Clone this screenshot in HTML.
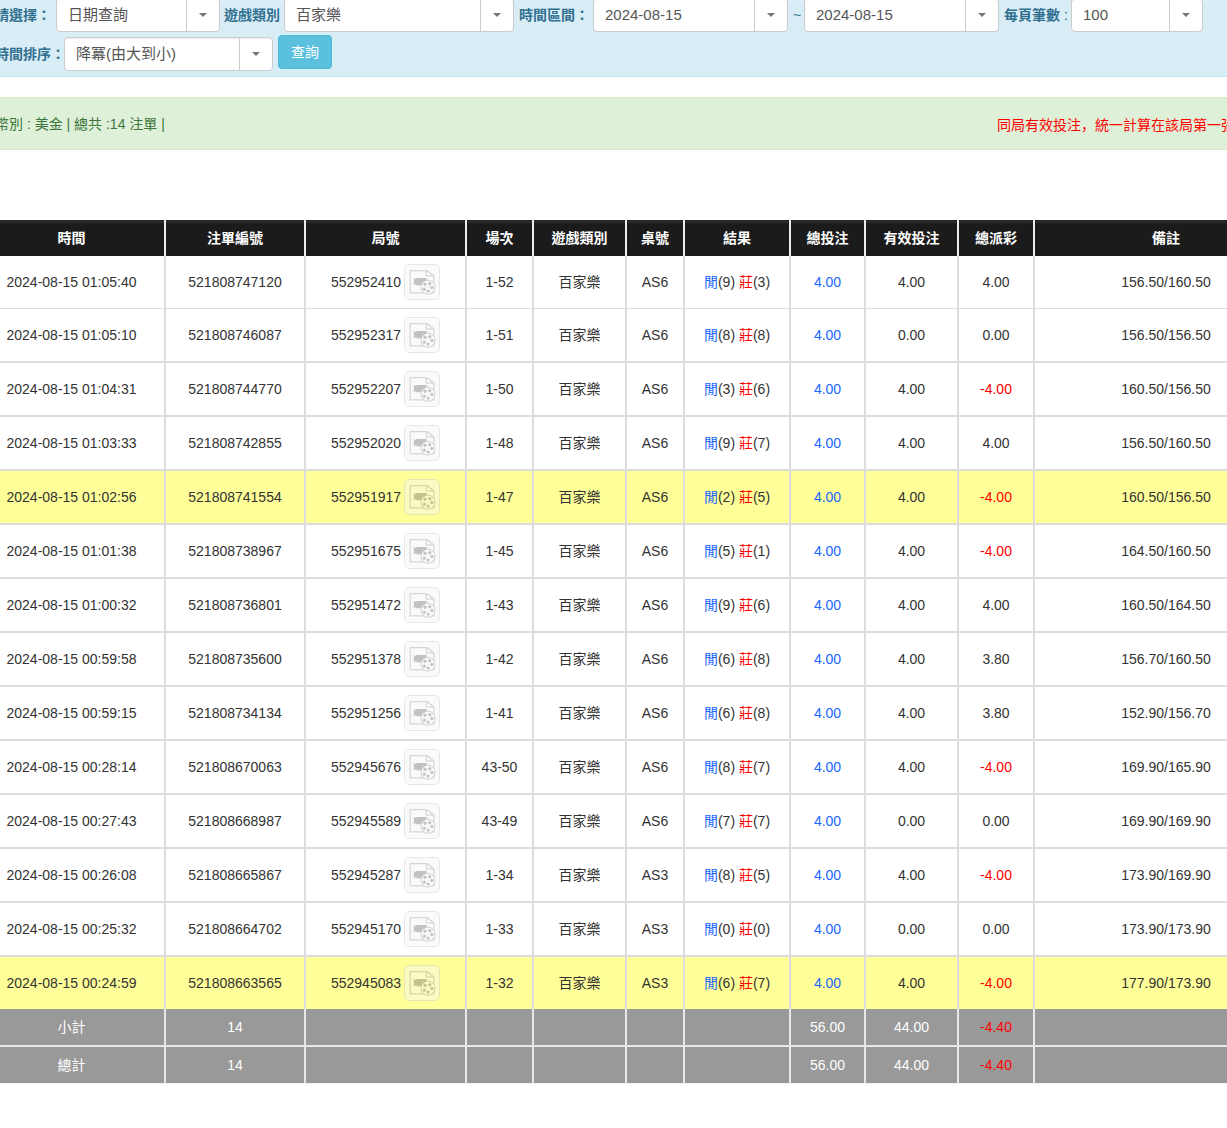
<!DOCTYPE html>
<html lang="zh-Hant">
<head>
<meta charset="utf-8">
<title>注單查詢</title>
<style>
*{box-sizing:border-box}
html,body{margin:0;padding:0}
body{width:1227px;height:1128px;overflow:hidden;position:relative;background:#fff;font-family:"Liberation Sans","Noto Sans CJK TC",sans-serif;font-size:14px;line-height:20px;color:#333}
#wrap{position:absolute;left:-21px;top:0;width:1318px;height:1128px}
.info{position:absolute;left:0;top:-10px;width:1318px;height:87px;background:#d9edf7;border:1px solid #bce8f1;border-radius:4px;color:#31708f}
.lbl{position:absolute;font-weight:bold;color:#31708f;font-size:14px;line-height:20px;white-space:nowrap}
.sel{position:absolute;height:34px;background:#fff;border:1px solid #ccc;border-radius:4px;font-size:15px;line-height:32px;color:#555;padding-left:11px;white-space:nowrap;box-shadow:inset 0 1px 1px rgba(0,0,0,.075)}
.sel i{position:absolute;right:0;top:0;width:33px;height:32px;border-left:1px solid #ccc}
.sel i:after{content:"";position:absolute;left:12px;top:14px;border-left:4px solid transparent;border-right:4px solid transparent;border-top:4px solid #777}
.btn{position:absolute;left:298px;top:44px;width:54px;height:34px;background:#5bc0de;border:1px solid #46b8da;border-radius:4px;color:#fff;font-size:14px;line-height:32px;text-align:center}
.succ{position:absolute;left:0;top:97px;width:1318px;height:53px;background:#dff0d8;border:1px solid #d6e9c6;border-radius:4px;color:#3c763d;padding:16px 15px 0 15px;line-height:20px;white-space:nowrap}
.succ .warn{position:absolute;left:1017px;top:16px;color:#f00}
table{position:absolute;left:0;top:220px;border-collapse:separate;border-spacing:0;table-layout:fixed;width:1318px}
th{height:36px;background:#1b1b1b;background:linear-gradient(#1e1e1e 0,#2b2b2b 1px,#2a2a2a 2px,#1b1b1b 4px,#1b1b1b 35px,#121212 36px);color:#fff;font-weight:bold;text-align:center;padding:0;border-right:2px solid #eee;font-size:14px}
td{height:54px;padding:0;text-align:center;border-right:2px solid #ddd;border-bottom:2px solid #ddd;vertical-align:middle;white-space:nowrap}
tbody tr:first-child td{height:53px;border-bottom-width:1px}
tbody tr:last-child td{height:52px;border-bottom:0}
th:last-child,td:last-child{border-right:0}
tr.hl td{background:#ffff99}
.neg{color:#f00}
.lnk{color:#1a66ff}
.pl{color:#1a66ff}
.bk{color:#f00}
.gid{display:inline-block;vertical-align:middle}
.vid{display:inline-block;vertical-align:middle;width:36px;height:36px;margin-left:3px;border:1px solid #ccc;border-radius:5px;background:#f4f4f4;overflow:hidden;opacity:.45}
.vid svg{display:block;margin:-1px}
tfoot td{height:38px;background:#999;color:#fff;border-bottom:2px solid #e7e7e7;border-right-color:#e7e7e7}
tfoot tr:last-child td{height:37px;border-bottom:1px solid #f4f4f4}
tfoot td.neg{color:#f00}
</style>
</head>
<body>
<div id="wrap">
<div class="info">
<span class="lbl" style="left:15px;top:14px">請選擇：</span>
<div class="sel" style="left:76px;top:7px;width:164px">日期查詢<i></i></div>
<span class="lbl" style="left:244px;top:14px">遊戲類別</span>
<div class="sel" style="left:304px;top:7px;width:230px">百家樂<i></i></div>
<span class="lbl" style="left:539px;top:14px">時間區間：</span>
<div class="sel" style="left:613px;top:7px;width:195px">2024-08-15<i></i></div>
<span class="lbl" style="left:813px;top:14px;font-weight:normal">~</span>
<div class="sel" style="left:824px;top:7px;width:195px">2024-08-15<i></i></div>
<span class="lbl" style="left:1024px;top:14px">每頁筆數 <span style="font-weight:normal">:</span></span>
<div class="sel" style="left:1091px;top:7px;width:132px">100<i></i></div>
<span class="lbl" style="left:15px;top:53px">時間排序：</span>
<div class="sel" style="left:84px;top:46px;width:209px">降冪(由大到小)<i></i></div>
<div class="btn">查詢</div>
</div>
<div class="succ">幣別 : 美金 | 總共 :14 注單 |<span class="warn">同局有效投注<span lang="ja" style="font-family:'Noto Sans CJK JP',sans-serif">，</span>統一計算在該局第一張注單</span></div>
<table>
<colgroup><col style="width:187px"><col style="width:140px"><col style="width:161px"><col style="width:67px"><col style="width:93px"><col style="width:58px"><col style="width:106px"><col style="width:75px"><col style="width:93px"><col style="width:76px"><col style="width:262px"></colgroup>
<thead><tr><th>時間</th><th>注單編號</th><th>局號</th><th>場次</th><th>遊戲類別</th><th>桌號</th><th>結果</th><th>總投注</th><th>有效投注</th><th>總派彩</th><th>備註</th></tr></thead>
<tbody>
<tr><td>2024-08-15 01:05:40</td><td>521808747120</td><td class="g"><span class="gid">552952410</span><span class="vid"><svg width="36" height="36" viewBox="0 0 36 36"><path d="M6.2 6.6h16.2l7.4 5.3v17h-23.6z" fill="#f4f4f4" stroke="#a6a6a6" stroke-width="1.2"/><path d="M22.4 6.6v5.3h7.4z" fill="#fff" stroke="#a6a6a6" stroke-width="1.2" stroke-linejoin="round"/><path d="M9.8 13.9l2.4 1.4v-1.4h10.5v7.4h-10.5v-1.4l-2.4 1.4z" fill="#7a7a7a"/><circle cx="24" cy="23.2" r="7" fill="#fafafa" stroke="#9a9a9a" stroke-width="1"/><g fill="#828282"><circle cx="21" cy="20.3" r="1.7"/><circle cx="25.7" cy="19.8" r="1.7"/><circle cx="27.9" cy="23.45" r="1.7"/><circle cx="24.25" cy="27.1" r="1.7"/><circle cx="20.3" cy="25.15" r="1.7"/><circle cx="23.8" cy="23.2" r=".5"/></g></svg></span></td><td>1-52</td><td>百家樂</td><td>AS6</td><td><span class="pl">閒</span>(9) <span class="bk">莊</span>(3)</td><td class="lnk">4.00</td><td>4.00</td><td>4.00</td><td>156.50/160.50</td></tr>
<tr><td>2024-08-15 01:05:10</td><td>521808746087</td><td class="g"><span class="gid">552952317</span><span class="vid"><svg width="36" height="36" viewBox="0 0 36 36"><path d="M6.2 6.6h16.2l7.4 5.3v17h-23.6z" fill="#f4f4f4" stroke="#a6a6a6" stroke-width="1.2"/><path d="M22.4 6.6v5.3h7.4z" fill="#fff" stroke="#a6a6a6" stroke-width="1.2" stroke-linejoin="round"/><path d="M9.8 13.9l2.4 1.4v-1.4h10.5v7.4h-10.5v-1.4l-2.4 1.4z" fill="#7a7a7a"/><circle cx="24" cy="23.2" r="7" fill="#fafafa" stroke="#9a9a9a" stroke-width="1"/><g fill="#828282"><circle cx="21" cy="20.3" r="1.7"/><circle cx="25.7" cy="19.8" r="1.7"/><circle cx="27.9" cy="23.45" r="1.7"/><circle cx="24.25" cy="27.1" r="1.7"/><circle cx="20.3" cy="25.15" r="1.7"/><circle cx="23.8" cy="23.2" r=".5"/></g></svg></span></td><td>1-51</td><td>百家樂</td><td>AS6</td><td><span class="pl">閒</span>(8) <span class="bk">莊</span>(8)</td><td class="lnk">4.00</td><td>0.00</td><td>0.00</td><td>156.50/156.50</td></tr>
<tr><td>2024-08-15 01:04:31</td><td>521808744770</td><td class="g"><span class="gid">552952207</span><span class="vid"><svg width="36" height="36" viewBox="0 0 36 36"><path d="M6.2 6.6h16.2l7.4 5.3v17h-23.6z" fill="#f4f4f4" stroke="#a6a6a6" stroke-width="1.2"/><path d="M22.4 6.6v5.3h7.4z" fill="#fff" stroke="#a6a6a6" stroke-width="1.2" stroke-linejoin="round"/><path d="M9.8 13.9l2.4 1.4v-1.4h10.5v7.4h-10.5v-1.4l-2.4 1.4z" fill="#7a7a7a"/><circle cx="24" cy="23.2" r="7" fill="#fafafa" stroke="#9a9a9a" stroke-width="1"/><g fill="#828282"><circle cx="21" cy="20.3" r="1.7"/><circle cx="25.7" cy="19.8" r="1.7"/><circle cx="27.9" cy="23.45" r="1.7"/><circle cx="24.25" cy="27.1" r="1.7"/><circle cx="20.3" cy="25.15" r="1.7"/><circle cx="23.8" cy="23.2" r=".5"/></g></svg></span></td><td>1-50</td><td>百家樂</td><td>AS6</td><td><span class="pl">閒</span>(3) <span class="bk">莊</span>(6)</td><td class="lnk">4.00</td><td>4.00</td><td class="neg">-4.00</td><td>160.50/156.50</td></tr>
<tr><td>2024-08-15 01:03:33</td><td>521808742855</td><td class="g"><span class="gid">552952020</span><span class="vid"><svg width="36" height="36" viewBox="0 0 36 36"><path d="M6.2 6.6h16.2l7.4 5.3v17h-23.6z" fill="#f4f4f4" stroke="#a6a6a6" stroke-width="1.2"/><path d="M22.4 6.6v5.3h7.4z" fill="#fff" stroke="#a6a6a6" stroke-width="1.2" stroke-linejoin="round"/><path d="M9.8 13.9l2.4 1.4v-1.4h10.5v7.4h-10.5v-1.4l-2.4 1.4z" fill="#7a7a7a"/><circle cx="24" cy="23.2" r="7" fill="#fafafa" stroke="#9a9a9a" stroke-width="1"/><g fill="#828282"><circle cx="21" cy="20.3" r="1.7"/><circle cx="25.7" cy="19.8" r="1.7"/><circle cx="27.9" cy="23.45" r="1.7"/><circle cx="24.25" cy="27.1" r="1.7"/><circle cx="20.3" cy="25.15" r="1.7"/><circle cx="23.8" cy="23.2" r=".5"/></g></svg></span></td><td>1-48</td><td>百家樂</td><td>AS6</td><td><span class="pl">閒</span>(9) <span class="bk">莊</span>(7)</td><td class="lnk">4.00</td><td>4.00</td><td>4.00</td><td>156.50/160.50</td></tr>
<tr class="hl"><td>2024-08-15 01:02:56</td><td>521808741554</td><td class="g"><span class="gid">552951917</span><span class="vid"><svg width="36" height="36" viewBox="0 0 36 36"><path d="M6.2 6.6h16.2l7.4 5.3v17h-23.6z" fill="#f4f4f4" stroke="#a6a6a6" stroke-width="1.2"/><path d="M22.4 6.6v5.3h7.4z" fill="#fff" stroke="#a6a6a6" stroke-width="1.2" stroke-linejoin="round"/><path d="M9.8 13.9l2.4 1.4v-1.4h10.5v7.4h-10.5v-1.4l-2.4 1.4z" fill="#7a7a7a"/><circle cx="24" cy="23.2" r="7" fill="#fafafa" stroke="#9a9a9a" stroke-width="1"/><g fill="#828282"><circle cx="21" cy="20.3" r="1.7"/><circle cx="25.7" cy="19.8" r="1.7"/><circle cx="27.9" cy="23.45" r="1.7"/><circle cx="24.25" cy="27.1" r="1.7"/><circle cx="20.3" cy="25.15" r="1.7"/><circle cx="23.8" cy="23.2" r=".5"/></g></svg></span></td><td>1-47</td><td>百家樂</td><td>AS6</td><td><span class="pl">閒</span>(2) <span class="bk">莊</span>(5)</td><td class="lnk">4.00</td><td>4.00</td><td class="neg">-4.00</td><td>160.50/156.50</td></tr>
<tr><td>2024-08-15 01:01:38</td><td>521808738967</td><td class="g"><span class="gid">552951675</span><span class="vid"><svg width="36" height="36" viewBox="0 0 36 36"><path d="M6.2 6.6h16.2l7.4 5.3v17h-23.6z" fill="#f4f4f4" stroke="#a6a6a6" stroke-width="1.2"/><path d="M22.4 6.6v5.3h7.4z" fill="#fff" stroke="#a6a6a6" stroke-width="1.2" stroke-linejoin="round"/><path d="M9.8 13.9l2.4 1.4v-1.4h10.5v7.4h-10.5v-1.4l-2.4 1.4z" fill="#7a7a7a"/><circle cx="24" cy="23.2" r="7" fill="#fafafa" stroke="#9a9a9a" stroke-width="1"/><g fill="#828282"><circle cx="21" cy="20.3" r="1.7"/><circle cx="25.7" cy="19.8" r="1.7"/><circle cx="27.9" cy="23.45" r="1.7"/><circle cx="24.25" cy="27.1" r="1.7"/><circle cx="20.3" cy="25.15" r="1.7"/><circle cx="23.8" cy="23.2" r=".5"/></g></svg></span></td><td>1-45</td><td>百家樂</td><td>AS6</td><td><span class="pl">閒</span>(5) <span class="bk">莊</span>(1)</td><td class="lnk">4.00</td><td>4.00</td><td class="neg">-4.00</td><td>164.50/160.50</td></tr>
<tr><td>2024-08-15 01:00:32</td><td>521808736801</td><td class="g"><span class="gid">552951472</span><span class="vid"><svg width="36" height="36" viewBox="0 0 36 36"><path d="M6.2 6.6h16.2l7.4 5.3v17h-23.6z" fill="#f4f4f4" stroke="#a6a6a6" stroke-width="1.2"/><path d="M22.4 6.6v5.3h7.4z" fill="#fff" stroke="#a6a6a6" stroke-width="1.2" stroke-linejoin="round"/><path d="M9.8 13.9l2.4 1.4v-1.4h10.5v7.4h-10.5v-1.4l-2.4 1.4z" fill="#7a7a7a"/><circle cx="24" cy="23.2" r="7" fill="#fafafa" stroke="#9a9a9a" stroke-width="1"/><g fill="#828282"><circle cx="21" cy="20.3" r="1.7"/><circle cx="25.7" cy="19.8" r="1.7"/><circle cx="27.9" cy="23.45" r="1.7"/><circle cx="24.25" cy="27.1" r="1.7"/><circle cx="20.3" cy="25.15" r="1.7"/><circle cx="23.8" cy="23.2" r=".5"/></g></svg></span></td><td>1-43</td><td>百家樂</td><td>AS6</td><td><span class="pl">閒</span>(9) <span class="bk">莊</span>(6)</td><td class="lnk">4.00</td><td>4.00</td><td>4.00</td><td>160.50/164.50</td></tr>
<tr><td>2024-08-15 00:59:58</td><td>521808735600</td><td class="g"><span class="gid">552951378</span><span class="vid"><svg width="36" height="36" viewBox="0 0 36 36"><path d="M6.2 6.6h16.2l7.4 5.3v17h-23.6z" fill="#f4f4f4" stroke="#a6a6a6" stroke-width="1.2"/><path d="M22.4 6.6v5.3h7.4z" fill="#fff" stroke="#a6a6a6" stroke-width="1.2" stroke-linejoin="round"/><path d="M9.8 13.9l2.4 1.4v-1.4h10.5v7.4h-10.5v-1.4l-2.4 1.4z" fill="#7a7a7a"/><circle cx="24" cy="23.2" r="7" fill="#fafafa" stroke="#9a9a9a" stroke-width="1"/><g fill="#828282"><circle cx="21" cy="20.3" r="1.7"/><circle cx="25.7" cy="19.8" r="1.7"/><circle cx="27.9" cy="23.45" r="1.7"/><circle cx="24.25" cy="27.1" r="1.7"/><circle cx="20.3" cy="25.15" r="1.7"/><circle cx="23.8" cy="23.2" r=".5"/></g></svg></span></td><td>1-42</td><td>百家樂</td><td>AS6</td><td><span class="pl">閒</span>(6) <span class="bk">莊</span>(8)</td><td class="lnk">4.00</td><td>4.00</td><td>3.80</td><td>156.70/160.50</td></tr>
<tr><td>2024-08-15 00:59:15</td><td>521808734134</td><td class="g"><span class="gid">552951256</span><span class="vid"><svg width="36" height="36" viewBox="0 0 36 36"><path d="M6.2 6.6h16.2l7.4 5.3v17h-23.6z" fill="#f4f4f4" stroke="#a6a6a6" stroke-width="1.2"/><path d="M22.4 6.6v5.3h7.4z" fill="#fff" stroke="#a6a6a6" stroke-width="1.2" stroke-linejoin="round"/><path d="M9.8 13.9l2.4 1.4v-1.4h10.5v7.4h-10.5v-1.4l-2.4 1.4z" fill="#7a7a7a"/><circle cx="24" cy="23.2" r="7" fill="#fafafa" stroke="#9a9a9a" stroke-width="1"/><g fill="#828282"><circle cx="21" cy="20.3" r="1.7"/><circle cx="25.7" cy="19.8" r="1.7"/><circle cx="27.9" cy="23.45" r="1.7"/><circle cx="24.25" cy="27.1" r="1.7"/><circle cx="20.3" cy="25.15" r="1.7"/><circle cx="23.8" cy="23.2" r=".5"/></g></svg></span></td><td>1-41</td><td>百家樂</td><td>AS6</td><td><span class="pl">閒</span>(6) <span class="bk">莊</span>(8)</td><td class="lnk">4.00</td><td>4.00</td><td>3.80</td><td>152.90/156.70</td></tr>
<tr><td>2024-08-15 00:28:14</td><td>521808670063</td><td class="g"><span class="gid">552945676</span><span class="vid"><svg width="36" height="36" viewBox="0 0 36 36"><path d="M6.2 6.6h16.2l7.4 5.3v17h-23.6z" fill="#f4f4f4" stroke="#a6a6a6" stroke-width="1.2"/><path d="M22.4 6.6v5.3h7.4z" fill="#fff" stroke="#a6a6a6" stroke-width="1.2" stroke-linejoin="round"/><path d="M9.8 13.9l2.4 1.4v-1.4h10.5v7.4h-10.5v-1.4l-2.4 1.4z" fill="#7a7a7a"/><circle cx="24" cy="23.2" r="7" fill="#fafafa" stroke="#9a9a9a" stroke-width="1"/><g fill="#828282"><circle cx="21" cy="20.3" r="1.7"/><circle cx="25.7" cy="19.8" r="1.7"/><circle cx="27.9" cy="23.45" r="1.7"/><circle cx="24.25" cy="27.1" r="1.7"/><circle cx="20.3" cy="25.15" r="1.7"/><circle cx="23.8" cy="23.2" r=".5"/></g></svg></span></td><td>43-50</td><td>百家樂</td><td>AS6</td><td><span class="pl">閒</span>(8) <span class="bk">莊</span>(7)</td><td class="lnk">4.00</td><td>4.00</td><td class="neg">-4.00</td><td>169.90/165.90</td></tr>
<tr><td>2024-08-15 00:27:43</td><td>521808668987</td><td class="g"><span class="gid">552945589</span><span class="vid"><svg width="36" height="36" viewBox="0 0 36 36"><path d="M6.2 6.6h16.2l7.4 5.3v17h-23.6z" fill="#f4f4f4" stroke="#a6a6a6" stroke-width="1.2"/><path d="M22.4 6.6v5.3h7.4z" fill="#fff" stroke="#a6a6a6" stroke-width="1.2" stroke-linejoin="round"/><path d="M9.8 13.9l2.4 1.4v-1.4h10.5v7.4h-10.5v-1.4l-2.4 1.4z" fill="#7a7a7a"/><circle cx="24" cy="23.2" r="7" fill="#fafafa" stroke="#9a9a9a" stroke-width="1"/><g fill="#828282"><circle cx="21" cy="20.3" r="1.7"/><circle cx="25.7" cy="19.8" r="1.7"/><circle cx="27.9" cy="23.45" r="1.7"/><circle cx="24.25" cy="27.1" r="1.7"/><circle cx="20.3" cy="25.15" r="1.7"/><circle cx="23.8" cy="23.2" r=".5"/></g></svg></span></td><td>43-49</td><td>百家樂</td><td>AS6</td><td><span class="pl">閒</span>(7) <span class="bk">莊</span>(7)</td><td class="lnk">4.00</td><td>0.00</td><td>0.00</td><td>169.90/169.90</td></tr>
<tr><td>2024-08-15 00:26:08</td><td>521808665867</td><td class="g"><span class="gid">552945287</span><span class="vid"><svg width="36" height="36" viewBox="0 0 36 36"><path d="M6.2 6.6h16.2l7.4 5.3v17h-23.6z" fill="#f4f4f4" stroke="#a6a6a6" stroke-width="1.2"/><path d="M22.4 6.6v5.3h7.4z" fill="#fff" stroke="#a6a6a6" stroke-width="1.2" stroke-linejoin="round"/><path d="M9.8 13.9l2.4 1.4v-1.4h10.5v7.4h-10.5v-1.4l-2.4 1.4z" fill="#7a7a7a"/><circle cx="24" cy="23.2" r="7" fill="#fafafa" stroke="#9a9a9a" stroke-width="1"/><g fill="#828282"><circle cx="21" cy="20.3" r="1.7"/><circle cx="25.7" cy="19.8" r="1.7"/><circle cx="27.9" cy="23.45" r="1.7"/><circle cx="24.25" cy="27.1" r="1.7"/><circle cx="20.3" cy="25.15" r="1.7"/><circle cx="23.8" cy="23.2" r=".5"/></g></svg></span></td><td>1-34</td><td>百家樂</td><td>AS3</td><td><span class="pl">閒</span>(8) <span class="bk">莊</span>(5)</td><td class="lnk">4.00</td><td>4.00</td><td class="neg">-4.00</td><td>173.90/169.90</td></tr>
<tr><td>2024-08-15 00:25:32</td><td>521808664702</td><td class="g"><span class="gid">552945170</span><span class="vid"><svg width="36" height="36" viewBox="0 0 36 36"><path d="M6.2 6.6h16.2l7.4 5.3v17h-23.6z" fill="#f4f4f4" stroke="#a6a6a6" stroke-width="1.2"/><path d="M22.4 6.6v5.3h7.4z" fill="#fff" stroke="#a6a6a6" stroke-width="1.2" stroke-linejoin="round"/><path d="M9.8 13.9l2.4 1.4v-1.4h10.5v7.4h-10.5v-1.4l-2.4 1.4z" fill="#7a7a7a"/><circle cx="24" cy="23.2" r="7" fill="#fafafa" stroke="#9a9a9a" stroke-width="1"/><g fill="#828282"><circle cx="21" cy="20.3" r="1.7"/><circle cx="25.7" cy="19.8" r="1.7"/><circle cx="27.9" cy="23.45" r="1.7"/><circle cx="24.25" cy="27.1" r="1.7"/><circle cx="20.3" cy="25.15" r="1.7"/><circle cx="23.8" cy="23.2" r=".5"/></g></svg></span></td><td>1-33</td><td>百家樂</td><td>AS3</td><td><span class="pl">閒</span>(0) <span class="bk">莊</span>(0)</td><td class="lnk">4.00</td><td>0.00</td><td>0.00</td><td>173.90/173.90</td></tr>
<tr class="hl"><td>2024-08-15 00:24:59</td><td>521808663565</td><td class="g"><span class="gid">552945083</span><span class="vid"><svg width="36" height="36" viewBox="0 0 36 36"><path d="M6.2 6.6h16.2l7.4 5.3v17h-23.6z" fill="#f4f4f4" stroke="#a6a6a6" stroke-width="1.2"/><path d="M22.4 6.6v5.3h7.4z" fill="#fff" stroke="#a6a6a6" stroke-width="1.2" stroke-linejoin="round"/><path d="M9.8 13.9l2.4 1.4v-1.4h10.5v7.4h-10.5v-1.4l-2.4 1.4z" fill="#7a7a7a"/><circle cx="24" cy="23.2" r="7" fill="#fafafa" stroke="#9a9a9a" stroke-width="1"/><g fill="#828282"><circle cx="21" cy="20.3" r="1.7"/><circle cx="25.7" cy="19.8" r="1.7"/><circle cx="27.9" cy="23.45" r="1.7"/><circle cx="24.25" cy="27.1" r="1.7"/><circle cx="20.3" cy="25.15" r="1.7"/><circle cx="23.8" cy="23.2" r=".5"/></g></svg></span></td><td>1-32</td><td>百家樂</td><td>AS3</td><td><span class="pl">閒</span>(6) <span class="bk">莊</span>(7)</td><td class="lnk">4.00</td><td>4.00</td><td class="neg">-4.00</td><td>177.90/173.90</td></tr>
</tbody>
<tfoot>
<tr><td>小計</td><td>14</td><td></td><td></td><td></td><td></td><td></td><td>56.00</td><td>44.00</td><td class="neg">-4.40</td><td></td></tr>
<tr><td>總計</td><td>14</td><td></td><td></td><td></td><td></td><td></td><td>56.00</td><td>44.00</td><td class="neg">-4.40</td><td></td></tr>
</tfoot>
</table>
</div>
</body>
</html>
